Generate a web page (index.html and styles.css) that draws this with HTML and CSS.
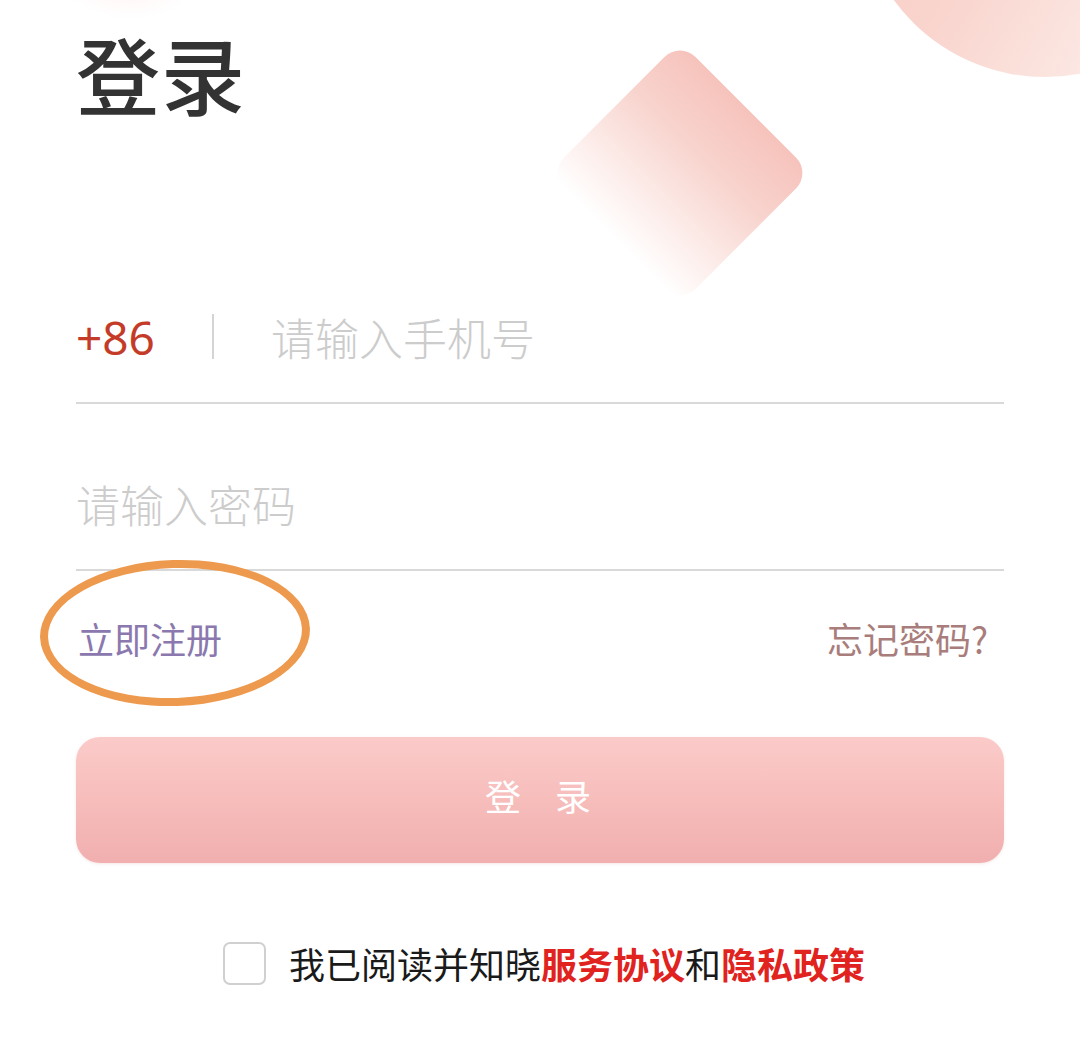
FILE: index.html
```html
<!DOCTYPE html>
<html lang="zh-CN">
<head>
<meta charset="utf-8">
<title>登录</title>
<link rel="stylesheet" href="styles.css">
</head>
<body>
<div class="page">
  <div class="deco deco-blob"></div>
  <div class="deco deco-circle"></div>
  <div class="deco deco-diamond"></div>

  <h1 class="title">登录</h1>

  <div class="field field-phone">
    <span class="prefix">+86</span>
    <span class="divider"></span>
    <span class="placeholder">请输入手机号</span>
  </div>

  <div class="field">
    <span class="placeholder">请输入密码</span>
  </div>

  <div class="links">
    <span class="register">立即注册</span>
    <span class="forgot">忘记密码?</span>
    <span class="annot"></span>
  </div>

  <button class="login-btn" type="button">登录</button>

  <div class="agree">
    <span class="checkbox"></span>
    <span class="agree-text">我已阅读并知晓<b class="hl">服务协议</b>和<b class="hl">隐私政策</b></span>
  </div>
</div>
</body>
</html>
```

FILE: styles.css
```css
html, body {
  margin: 0;
  padding: 0;
  background: #ffffff;
}

body {
  font-family: "Noto Sans CJK SC", "Noto Sans", sans-serif;
  color: #333333;
}

.page {
  position: relative;
  width: 1080px;
  height: 1048px;
  box-sizing: border-box;
  padding: 0 76px;
  overflow: hidden;
}

.deco {
  position: absolute;
  pointer-events: none;
}

.deco-blob {
  left: 60px;
  top: -70px;
  width: 140px;
  height: 90px;
  border-radius: 50%;
  background: radial-gradient(ellipse at 50% 50%, rgba(250, 218, 210, 0.35), rgba(255, 255, 255, 0) 70%);
}

.deco-circle {
  left: 858px;
  top: -297px;
  width: 374px;
  height: 374px;
  border-radius: 50%;
  background: linear-gradient(120deg, #f6c6be 0%, #f9d5ce 45%, #fdeeea 85%);
}

.deco-diamond {
  left: 587px;
  top: 80px;
  width: 186px;
  height: 186px;
  border-radius: 22px;
  transform: rotate(45deg);
  background: linear-gradient(180deg, #f6c3bc 0%, #f8d3cd 35%, #fcebe8 70%, rgba(255, 255, 255, 0) 100%);
}

.title {
  position: relative;
  margin: 0;
  padding-top: 31px;
  font-size: 84px;
  line-height: 1;
  font-weight: 500;
  color: #333333;
  letter-spacing: 1px;
}

.field {
  position: relative;
  display: flex;
  align-items: flex-end;
  height: 167px;
  box-sizing: border-box;
  padding-bottom: 43px;
  border-bottom: 2px solid #d9d9d9;
}

.field-phone {
  height: 289px;
}

.prefix {
  font-family: "Noto Sans", "Noto Sans CJK SC", sans-serif;
  font-size: 46px;
  line-height: 44px;
  color: #c43c28;
}

.divider {
  width: 2px;
  height: 45px;
  margin: 0 57px 0 57px;
  background: #d4d4d4;
}

.placeholder {
  font-size: 44px;
  line-height: 44px;
  font-weight: 300;
  color: #cccccc;
}

.links {
  position: relative;
  display: flex;
  justify-content: space-between;
  align-items: center;
  margin-top: 49px;
  padding-right: 16px;
  font-size: 36px;
  line-height: 36px;
}

.register {
  color: #8a78ae;
  padding-left: 2px;
}

.forgot {
  color: #a97d7b;
}

.annot {
  position: absolute;
  left: -36px;
  top: -60px;
  width: 270px;
  height: 146px;
  box-sizing: border-box;
  border: 8px solid #ee9a4e;
  border-radius: 50%;
  transform: rotate(-2deg);
}

.login-btn {
  display: block;
  width: 100%;
  height: 126px;
  margin-top: 81px;
  border: none;
  border-radius: 24px;
  background: linear-gradient(to bottom, #fbcbc9 0%, #f6bdbb 50%, #f1afaf 100%);
  box-shadow: 0 1px 3px rgba(220, 160, 160, 0.25);
  font-family: "Noto Sans CJK SC", sans-serif;
  font-size: 36px;
  line-height: 36px;
  color: #ffffff;
  letter-spacing: 34px;
  padding: 0 0 10px 30px;
  cursor: pointer;
}

.agree {
  display: flex;
  align-items: center;
  justify-content: center;
  gap: 23px;
  margin-top: 79px;
  padding-left: 8px;
}

.checkbox {
  width: 43px;
  height: 43px;
  box-sizing: border-box;
  border: 2px solid #d0d0d0;
  border-radius: 7px;
  background: #ffffff;
}

.agree-text {
  font-size: 36px;
  line-height: 43px;
  color: #1a1a1a;
}

.hl {
  color: #e0231e;
  font-weight: 700;
}
```
